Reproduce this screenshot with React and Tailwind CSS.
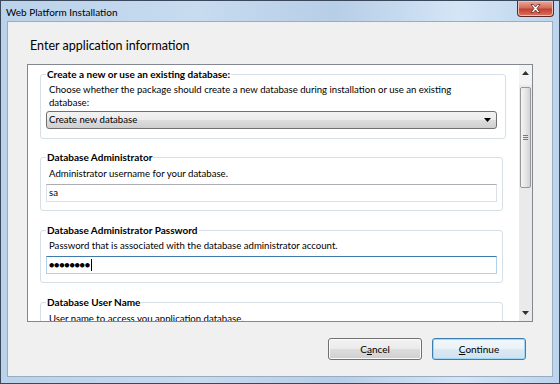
import React from 'react';

const Group = ({ title, className, children }) => (
  <fieldset className={className}>
    <legend className="px-[1px] text-[10px] font-bold leading-[13px] text-black">{title}</legend>
    {children}
  </fieldset>
);

const Scrollbar = () => (
  <div className="flex w-[13px] shrink-0 flex-col bg-[#eaeaea]">
    <div className="flex h-[20px] justify-center bg-[#f3f3f3] pt-[6px]">
      <svg width="7" height="4" viewBox="0 0 7 4">
        <path d="M0 4 L3.5 0 L7 4 Z" fill="#303030" />
      </svg>
    </div>
    <div className="mx-[1px] mt-[2px] flex h-[101px] flex-col items-center justify-center gap-[1px] rounded-[2px] border border-[#979797] bg-[linear-gradient(to_right,#f4f4f4,#e6e6e6_50%,#d2d2d2)]">
      <div className="h-px w-[5px] bg-[#7a7a7a]" />
      <div className="h-px w-[5px] bg-[#7a7a7a]" />
      <div className="h-px w-[5px] bg-[#7a7a7a]" />
    </div>
    <div className="flex-1" />
    <div className="flex h-[16px] items-center justify-center">
      <svg width="7" height="4" viewBox="0 0 7 4">
        <path d="M0 0 L7 0 L3.5 4 Z" fill="#303030" />
      </svg>
    </div>
  </div>
);

const Button = ({ children, primary }) => (
  <button
    className={
      primary
        ? 'h-[22px] w-[94px] rounded-[3px] border border-[#3c7fb1] bg-[linear-gradient(to_bottom,#f2f8fc,#eaf2f8_50%,#dce9f3_50%,#d0e2ef)] text-[10px] text-black shadow-[inset_0_0_0_1px_#9fd7f5]'
        : 'h-[22px] w-[94px] rounded-[3px] border border-[#707070] bg-[linear-gradient(to_bottom,#f2f2f2,#ebebeb_50%,#dddddd_50%,#cfcfcf)] text-[10px] text-black shadow-[inset_0_0_0_1px_#fbfbfb]'
    }
  >
    {children}
  </button>
);

export default function App() {
  return (
    <div className="flex h-[384px] w-[560px] flex-col border border-[#39485a] bg-[linear-gradient(to_right,#bad2ea,#c8dbef_35%,#b7cee7_60%,#d4e5f6_82%,#bdd4ec)] font-['Lato',sans-serif] text-black">
      <div className="flex h-[20px] shrink-0 items-start justify-between">
        <div className="pl-[5px] pt-[5px] text-[10px] leading-[12px]">Web Platform Installation</div>
        <div className="mr-[5px] flex h-[16px] w-[37px] items-center justify-center rounded-b-[4px] border border-t-0 border-[#5c2a26] bg-[linear-gradient(to_bottom,#e9a99c,#d46d5d_45%,#c3412f_55%,#d9745f)] shadow-[inset_0_0_0_1px_#eec0b5]">
          <svg width="11" height="9" viewBox="0 0 11 9">
            <path
              d="M1 0.5 L3.5 0.5 L5.5 3 L7.5 0.5 L10 0.5 L7 4.5 L10 8.5 L7.5 8.5 L5.5 6 L3.5 8.5 L1 8.5 L4 4.5 Z"
              fill="#ffffff"
              stroke="#5a2a2a"
              strokeWidth="0.8"
            />
          </svg>
        </div>
      </div>

      <div className="mx-[6px] mb-[6px] flex flex-1 flex-col border border-[#98acc4] bg-[#f0f0f0]">
        <div className="pl-[22px] pt-[14px] text-[12.5px] leading-[20px]">Enter application information</div>

        <div className="ml-[19px] mt-[8px] flex h-[258px] w-[506px] border border-[#828790] bg-white">
          <div className="flex flex-1 flex-col overflow-hidden pl-[12px]">
            <Group
              title="Create a new or use an existing database:"
              className="mt-[3px] w-[466px] shrink-0 rounded-[3px] border border-[#d5dfe5] px-[5px] pb-[9px]"
            >
              <div className="mt-[2px] pl-[3px] text-[9.6px] leading-[13px]">
                Choose whether the package should create a new database during installation or use an existing
                <br />
                database:
              </div>
              <div className="mt-[2px] flex h-[18px] w-[451px] items-center justify-between rounded-[3px] border border-[#707070] bg-[linear-gradient(to_bottom,#f2f2f2,#ebebeb_50%,#dddddd_50%,#cfcfcf)] pl-[2px] pr-[5px] text-[9.6px]">
                <span>Create new database</span>
                <svg width="7" height="4" viewBox="0 0 7 4">
                  <path d="M0 0 L7 0 L3.5 4 Z" fill="#000000" />
                </svg>
              </div>
            </Group>

            <Group
              title="Database Administrator"
              className="mt-[12px] w-[462px] shrink-0 rounded-[3px] border border-[#d5dfe5] px-[5px] pb-[8px]"
            >
              <div className="mt-[3px] pl-[3px] text-[9.6px] leading-[13px]">Administrator username for your database.</div>
              <div className="mt-[4px] flex h-[18px] w-[451px] items-center border border-[#dbdfe6] border-t-[#abadb3] pl-[2px] text-[9.6px]">
                sa
              </div>
            </Group>

            <Group
              title="Database Administrator Password"
              className="mt-[13px] w-[462px] shrink-0 rounded-[3px] border border-[#d5dfe5] px-[5px] pb-[8px]"
            >
              <div className="mt-[2px] pl-[3px] text-[9.6px] leading-[13px]">
                Password that is associated with the database administrator account.
              </div>
              <div className="mt-[4px] flex h-[18px] w-[451px] items-center border border-[#b5cfe7] border-t-[#3d7bad] pl-[2px] text-[9px]">
                <span className="font-bold tracking-[-0.3px]">●●●●●●●●</span>
                <span className="ml-[1px] h-[12px] w-px bg-black" />
              </div>
            </Group>

            <Group
              title="Database User Name"
              className="mt-[13px] w-[462px] shrink-0 rounded-[3px] border border-[#d5dfe5] px-[5px] pb-[8px]"
            >
              <div className="mt-[3px] pl-[3px] text-[9.6px] leading-[13px]">User name to access you application database.</div>
              <div className="mt-[4px] h-[18px] w-[451px] border border-[#dbdfe6] border-t-[#abadb3]" />
            </Group>
          </div>
          <Scrollbar />
        </div>

        <div className="flex justify-end gap-[10px] pr-[26px] pt-[16px]">
          <Button>
            C<span className="underline">a</span>ncel
          </Button>
          <Button primary>
            <span className="underline">C</span>ontinue
          </Button>
        </div>
      </div>
    </div>
  );
}
